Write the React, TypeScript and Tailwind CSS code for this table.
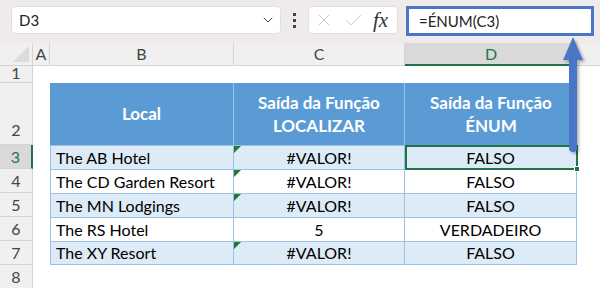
import { ChevronDown, X, Check } from 'lucide-react';

const rows = [
  { n: 3, local: 'The AB Hotel', loc: '#VALOR!', num: 'FALSO', flag: true },
  { n: 4, local: 'The CD Garden Resort', loc: '#VALOR!', num: 'FALSO', flag: true },
  { n: 5, local: 'The MN Lodgings', loc: '#VALOR!', num: 'FALSO', flag: true },
  { n: 6, local: 'The RS Hotel', loc: '5', num: 'VERDADEIRO', flag: false },
  { n: 7, local: 'The XY Resort', loc: '#VALOR!', num: 'FALSO', flag: true },
];

const font = { fontFamily: 'Lato, "Open Sans", sans-serif' };

export default function App() {
  return (
    <div className="relative w-[600px] h-[288px] overflow-hidden bg-white text-[#222]" style={font}>
      {/* Formula bar */}
      <div className="h-[43px] bg-[#eeebea] flex items-start pt-[6px] pl-[11px]">
        <div className="w-[270px] h-[28px] bg-white rounded-[4px] border border-[#e2dfde] flex items-center pl-[7px] pr-[4px]">
          <span className="text-[15px] flex-1">D3</span>
          <ChevronDown className="w-4 h-4 text-[#444]" strokeWidth={1.5} />
        </div>
        <div className="w-[27px] h-[28px] flex flex-col items-center justify-center gap-[3px]">
          <span className="w-[3px] h-[3px] bg-[#444]" />
          <span className="w-[3px] h-[3px] bg-[#444]" />
          <span className="w-[3px] h-[3px] bg-[#444]" />
        </div>
        <div className="w-[90px] h-[28px] bg-white rounded-[4px] border border-[#e2dfde] flex items-center pl-[5px] gap-[9px]">
          <X className="w-[20px] h-[20px] text-[#c4c4c4]" strokeWidth={1.1} />
          <Check className="w-[21px] h-[21px] text-[#c4c4c4]" strokeWidth={1.1} />
          <span className="italic text-[21px] leading-none text-[#333]" style={{ fontFamily: '"Liberation Serif", serif' }}>fx</span>
        </div>
        <div className="ml-[8px] w-[188px] h-[30px] bg-white border-[3px] border-[#4a76c6] flex items-center pl-[10px]">
          <span className="text-[15px]">=ÉNUM(C3)</span>
        </div>
      </div>

      {/* Sheet */}
      <div className="grid grid-cols-[33px_17px_184px_171px_172px_1fr] grid-rows-[23px_17px_62px_24px_24px_24px_24px_24px_24px]">
        {/* column headers */}
        <div className="bg-[#f0f0f0] border-b border-r border-[#d4d4d4] flex items-end justify-end pr-[3px] pb-[3px]">
          <div className="w-0 h-0 border-l-[16px] border-l-transparent border-b-[16px] border-b-[#dcdcdc]" />
        </div>
        <div className="bg-[#f0f0f0] border-b border-r border-[#d4d4d4] flex items-center justify-center text-[16px] text-[#444]">A</div>
        <div className="bg-[#f0f0f0] border-b border-r border-[#d4d4d4] flex items-center justify-center text-[16px] text-[#444]">B</div>
        <div className="bg-[#f0f0f0] border-b border-r border-[#d4d4d4] flex items-center justify-center text-[16px] text-[#444]">C</div>
        <div className="bg-[#d9d9d9] border-b-2 border-[#217346] flex items-center justify-center text-[16px] text-[#217346]">D</div>
        <div className="bg-[#f0f0f0] border-b border-[#d4d4d4]" />

        {/* row 1 */}
        <div className="bg-[#f0f0f0] border-r border-b border-[#d4d4d4] flex items-end justify-center text-[16px] text-[#444] leading-none pb-[1px]">1</div>
        <div className="col-span-5" />

        {/* row 2 header */}
        <div className="bg-[#f0f0f0] border-r border-b border-[#d4d4d4] flex items-end justify-center text-[16px] text-[#444] pb-[2px]">2</div>
        <div />
        <div className="bg-[#5b9bd5] border-r border-[#9bc2e6] flex items-center justify-center text-white font-bold text-[17px]">Local</div>
        <div className="bg-[#5b9bd5] border-r border-[#9bc2e6] flex flex-col items-center justify-center text-white font-bold text-[17px] leading-[23px]">
          <span>Saída da Função</span>
          <span>LOCALIZAR</span>
        </div>
        <div className="bg-[#5b9bd5] flex flex-col items-center justify-center text-white font-bold text-[17px] leading-[23px]">
          <span>Saída da Função</span>
          <span>ÉNUM</span>
        </div>
        <div />

        {rows.map((r, i) => {
          const bg = i % 2 === 0 ? 'bg-[#ddebf7]' : 'bg-white';
          const sel = r.n === 3;
          return [
            <div
              key={`h${r.n}`}
              className={
                sel
                  ? 'bg-[#d9d9d9] border-r-2 border-r-[#217346] border-b border-b-[#d4d4d4] flex items-center justify-center text-[16px] text-[#217346]'
                  : 'bg-[#f0f0f0] border-r border-b border-[#d4d4d4] flex items-center justify-center text-[16px] text-[#444]'
              }
            >
              {r.n}
            </div>,
            <div key={`a${r.n}`} />,
            <div key={`b${r.n}`} className={`${bg} border-t border-l border-r border-[#9bc2e6] ${i === 4 ? 'border-b' : ''} flex items-center pl-[5px] text-[16px] text-black`}>
              {r.local}
            </div>,
            <div key={`c${r.n}`} className={`relative ${bg} border-t border-r border-[#9bc2e6] ${i === 4 ? 'border-b' : ''} flex items-center justify-center text-[16px] text-black`}>
              {r.flag && (
                <span className="absolute left-0 top-0 w-0 h-0 border-t-[7px] border-t-[#1e7b34] border-r-[7px] border-r-transparent" />
              )}
              {r.loc}
            </div>,
            <div key={`d${r.n}`} className={`${bg} border-t border-r border-[#9bc2e6] ${i === 4 ? 'border-b' : ''} flex items-center justify-center text-[16px] text-black`}>
              {r.num}
            </div>,
            <div key={`e${r.n}`} />,
          ];
        })}

        {/* row 8 */}
        <div className="bg-[#f0f0f0] border-r border-[#d4d4d4] flex items-center justify-center text-[16px] text-[#444]">8</div>
        <div className="col-span-5" />
      </div>

      {/* active cell D3 */}
      <div className="absolute left-[405px] top-[145px] w-[173px] h-[25px] border-2 border-[#217346]" />
      <div className="absolute left-[574px] top-[166px] w-[6px] h-[6px] bg-[#217346] border border-white" />

      {/* callout arrow */}
      <svg className="absolute left-[556px] top-[34px]" width="34" height="124" viewBox="0 0 34 124">
        <defs>
          <filter id="sh" x="-50%" y="-20%" width="200%" height="140%">
            <feDropShadow dx="2" dy="2" stdDeviation="1.5" floodColor="#000" floodOpacity="0.3" />
          </filter>
        </defs>
        <g filter="url(#sh)">
          <path d="M17 3 L27 26 L21 26 L21 114 Q21 118 17 118 Q13 118 13 114 L13 26 L7 26 Z" fill="#4a76c6" />
        </g>
      </svg>
    </div>
  );
}
